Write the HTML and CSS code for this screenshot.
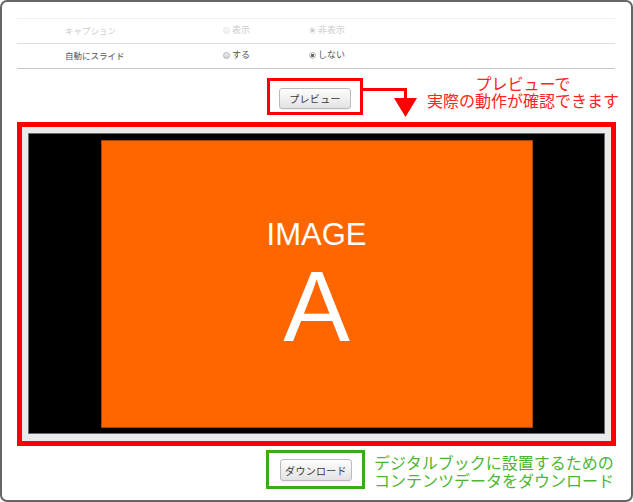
FILE: index.html
```html
<!DOCTYPE html>
<html lang="ja">
<head>
<meta charset="utf-8">
<title>プレビュー</title>
<link rel="stylesheet" href="styles.css">
</head>
<body>
<div class="frame">
  <div class="settings">
    <div class="row row-disabled">
      <span class="label">キャプション</span>
      <span class="opt"><i class="radio"></i>表示</span>
      <span class="opt"><i class="radio radio-on"></i>非表示</span>
    </div>
    <div class="row">
      <span class="label">自動にスライド</span>
      <span class="opt"><i class="radio"></i>する</span>
      <span class="opt"><i class="radio radio-on"></i>しない</span>
    </div>
  </div>

  <div class="preview-row">
    <div class="mark mark-red"><button class="btn" type="button">プレビュー</button></div>
    <p class="note note-red"><span class="note-line">プレビューで</span><span class="note-line">実際の動作が確認できます</span></p>
    <svg class="arrow" width="60" height="35" viewBox="0 0 60 35">
      <rect x="0" y="3" width="44" height="3" fill="#ff0000"/>
      <rect x="41" y="3" width="3" height="11" fill="#ff0000"/>
      <polygon points="31,13 54,13 42.5,32" fill="#ff0000"/>
    </svg>
  </div>

  <div class="stage">
    <div class="screen">
      <div class="image">
        <span class="image-title">IMAGE</span>
        <span class="image-letter">A</span>
      </div>
    </div>
  </div>

  <div class="download-row">
    <div class="mark mark-green"><button class="btn btn-tall" type="button">ダウンロード</button></div>
    <p class="note note-green"><span class="note-line">デジタルブックに設置するための</span><span class="note-line">コンテンツデータをダウンロード</span></p>
  </div>
</div>
</body>
</html>
```
FILE: styles.css
```css
html, body {
  margin: 0;
  background: #fff;
}
body {
  font-family: "Noto Sans CJK JP", "Liberation Sans", sans-serif;
}
.frame {
  box-sizing: border-box;
  width: 633px;
  height: 502px;
  border: 2px solid #666;
  border-radius: 7px;
  padding: 16px 0 0 15px;
  background: #fff;
}

/* settings rows */
.settings {
  width: 598px;
  border-bottom: 1px solid #c6c6c6;
}
.row {
  display: flex;
  align-items: center;
  height: 22px;
  padding-bottom: 2px;
  border-top: 1px solid #dcdcdc;
  font-size: 9px;
  line-height: 12px;
  color: #555;
}
.row-disabled {
  border-top-color: #f1f1f1;
  color: #cdcdcd;
}
.label {
  width: 158px;
  margin-left: 48px;
  font-size: 8.5px;
}
.opt {
  display: flex;
  align-items: center;
  width: 86px;
}
.radio {
  box-sizing: border-box;
  width: 7px;
  height: 7px;
  border-radius: 50%;
  border: 1px solid #b4b4b4;
  background: linear-gradient(#f2f2f2, #d0d0d0);
  margin: 1px 2px 0 0;
}
.radio-on {
  background: radial-gradient(circle, #666 0 1.4px, #f4f4f4 1.8px);
}
.row-disabled .radio {
  border-color: #e6e6e6;
  background: linear-gradient(#fafafa, #eee);
}
.row-disabled .radio-on {
  background: radial-gradient(circle, #c8c8c8 0 1.4px, #fafafa 1.8px);
}

/* annotations */
.preview-row {
  position: relative;
  display: flex;
  align-items: flex-start;
  width: 598px;
  margin-top: 6px;
}
.mark {
  box-sizing: border-box;
  flex-shrink: 0;
}
.mark-red {
  width: 96px;
  height: 37px;
  margin: 3px 0 0 250px;
  border: 3px solid #ff0000;
  padding: 7px 0 0 9px;
}
.note {
  margin: 0;
  flex-shrink: 0;
  font-size: 16px;
  white-space: nowrap;
}
.note-line {
  display: block;
}
.note-red {
  width: 192px;
  margin-left: 64px;
  text-align: center;
  line-height: 17px;
  color: #ff2222;
}
.arrow {
  position: absolute;
  left: 346px;
  top: 10px;
}
.btn {
  display: block;
  box-sizing: border-box;
  width: 72px;
  height: 21px;
  padding: 0;
  border: 1px solid #bababa;
  border-radius: 3px;
  background: linear-gradient(#fdfdfd, #e3e3e3);
  box-shadow: 0 1px 0 rgba(0,0,0,0.06);
  font-family: "Noto Sans CJK JP", sans-serif;
  font-size: 10px;
  letter-spacing: 0.3px;
  color: #3a3a3a;
  text-align: center;
}
.btn-tall {
  height: 22px;
}

/* stage */
.stage {
  box-sizing: border-box;
  width: 599px;
  height: 324px;
  margin-top: 7px;
  border: 5px solid #ff0000;
  background: #e8eaeb;
  padding: 6px 6px 7px 6px;
}
.screen {
  box-sizing: border-box;
  height: 100%;
  border: 1px solid #6a6a6a;
  background: #000;
  display: flex;
  align-items: center;
  justify-content: center;
}
.image {
  box-sizing: border-box;
  width: 432px;
  height: 288px;
  background: #ff6600;
  border: 1px solid #a84400;
  display: flex;
  flex-direction: column;
  align-items: center;
  padding-top: 78px;
  color: #fff;
  font-family: "Liberation Sans", Arial, sans-serif;
}
.image-title {
  font-size: 31px;
  line-height: 32px;
}
.image-letter {
  margin-top: 5px;
  font-size: 100px;
  line-height: 100px;
}

/* download */
.download-row {
  display: flex;
  align-items: flex-start;
  margin-top: 4px;
}
.mark-green {
  width: 99px;
  height: 39px;
  margin-left: 249px;
  border: 3px solid #3aab1a;
  padding: 6px 0 0 11px;
}
.note-green {
  margin: 3px 0 0 9px;
  line-height: 18px;
  color: #4cb631;
}
```
